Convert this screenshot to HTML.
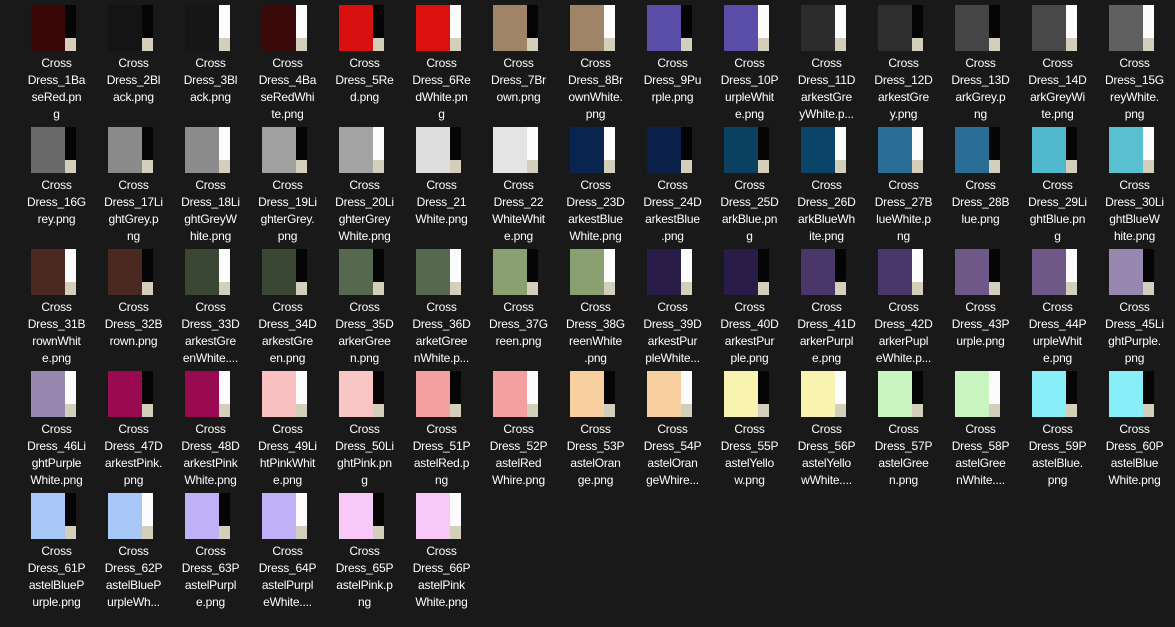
<!DOCTYPE html>
<html><head><meta charset="utf-8"><style>
html,body{margin:0;padding:0;background:#191919;width:1175px;height:627px;overflow:hidden}
.g{position:absolute;left:17px;top:5px;display:grid;grid-template-columns:repeat(15,77px);grid-auto-rows:122px}
.c{position:relative}
.c i{display:block;position:relative;margin-left:14px;width:45px;height:46px;background:var(--c)}
.c i::after{content:"";position:absolute;right:0;top:0;width:11px;height:46px;background:linear-gradient(var(--s) 0,var(--s) 33px,#d4cfbb 33px)}
.c i.b{--s:#050505}.c i.w{--s:#fcfcfc}
.c p{margin:4px 0 0 1px;width:77px;text-align:center;color:#fff;font:12px/17px "Liberation Sans",sans-serif;white-space:nowrap;letter-spacing:-0.2px}
</style></head><body><div class="g">
<div class="c"><i class="b" style="--c:#3a0808"></i><p>Cross<br>Dress_1Ba<br>seRed.pn<br>g</p></div>
<div class="c"><i class="b" style="--c:#141414"></i><p>Cross<br>Dress_2Bl<br>ack.png</p></div>
<div class="c"><i class="w" style="--c:#161616"></i><p>Cross<br>Dress_3Bl<br>ack.png</p></div>
<div class="c"><i class="w" style="--c:#3a0a0a"></i><p>Cross<br>Dress_4Ba<br>seRedWhi<br>te.png</p></div>
<div class="c"><i class="b" style="--c:#d81010"></i><p>Cross<br>Dress_5Re<br>d.png</p></div>
<div class="c"><i class="w" style="--c:#dd1010"></i><p>Cross<br>Dress_6Re<br>dWhite.pn<br>g</p></div>
<div class="c"><i class="b" style="--c:#a08468"></i><p>Cross<br>Dress_7Br<br>own.png</p></div>
<div class="c"><i class="w" style="--c:#a08468"></i><p>Cross<br>Dress_8Br<br>ownWhite.<br>png</p></div>
<div class="c"><i class="b" style="--c:#5a4ea8"></i><p>Cross<br>Dress_9Pu<br>rple.png</p></div>
<div class="c"><i class="w" style="--c:#5a4ea8"></i><p>Cross<br>Dress_10P<br>urpleWhit<br>e.png</p></div>
<div class="c"><i class="w" style="--c:#2c2c2c"></i><p>Cross<br>Dress_11D<br>arkestGre<br>yWhite.p...</p></div>
<div class="c"><i class="b" style="--c:#2e2e2e"></i><p>Cross<br>Dress_12D<br>arkestGre<br>y.png</p></div>
<div class="c"><i class="b" style="--c:#454545"></i><p>Cross<br>Dress_13D<br>arkGrey.p<br>ng</p></div>
<div class="c"><i class="w" style="--c:#484848"></i><p>Cross<br>Dress_14D<br>arkGreyWi<br>te.png</p></div>
<div class="c"><i class="w" style="--c:#606060"></i><p>Cross<br>Dress_15G<br>reyWhite.<br>png</p></div>
<div class="c"><i class="b" style="--c:#6a6a6a"></i><p>Cross<br>Dress_16G<br>rey.png</p></div>
<div class="c"><i class="b" style="--c:#8a8a8a"></i><p>Cross<br>Dress_17Li<br>ghtGrey.p<br>ng</p></div>
<div class="c"><i class="w" style="--c:#8c8c8c"></i><p>Cross<br>Dress_18Li<br>ghtGreyW<br>hite.png</p></div>
<div class="c"><i class="b" style="--c:#a0a0a0"></i><p>Cross<br>Dress_19Li<br>ghterGrey.<br>png</p></div>
<div class="c"><i class="w" style="--c:#a4a4a4"></i><p>Cross<br>Dress_20Li<br>ghterGrey<br>White.png</p></div>
<div class="c"><i class="b" style="--c:#dedede"></i><p>Cross<br>Dress_21<br>White.png</p></div>
<div class="c"><i class="w" style="--c:#e4e4e4"></i><p>Cross<br>Dress_22<br>WhiteWhit<br>e.png</p></div>
<div class="c"><i class="w" style="--c:#0a2450"></i><p>Cross<br>Dress_23D<br>arkestBlue<br>White.png</p></div>
<div class="c"><i class="b" style="--c:#0a2048"></i><p>Cross<br>Dress_24D<br>arkestBlue<br>.png</p></div>
<div class="c"><i class="b" style="--c:#0a4060"></i><p>Cross<br>Dress_25D<br>arkBlue.pn<br>g</p></div>
<div class="c"><i class="w" style="--c:#0a4468"></i><p>Cross<br>Dress_26D<br>arkBlueWh<br>ite.png</p></div>
<div class="c"><i class="w" style="--c:#2a6e98"></i><p>Cross<br>Dress_27B<br>lueWhite.p<br>ng</p></div>
<div class="c"><i class="b" style="--c:#2a6e98"></i><p>Cross<br>Dress_28B<br>lue.png</p></div>
<div class="c"><i class="b" style="--c:#50b8cc"></i><p>Cross<br>Dress_29Li<br>ghtBlue.pn<br>g</p></div>
<div class="c"><i class="w" style="--c:#58c0d0"></i><p>Cross<br>Dress_30Li<br>ghtBlueW<br>hite.png</p></div>
<div class="c"><i class="w" style="--c:#4a2a20"></i><p>Cross<br>Dress_31B<br>rownWhit<br>e.png</p></div>
<div class="c"><i class="b" style="--c:#4a2a20"></i><p>Cross<br>Dress_32B<br>rown.png</p></div>
<div class="c"><i class="w" style="--c:#3a4634"></i><p>Cross<br>Dress_33D<br>arkestGre<br>enWhite....</p></div>
<div class="c"><i class="b" style="--c:#3a4634"></i><p>Cross<br>Dress_34D<br>arkestGre<br>en.png</p></div>
<div class="c"><i class="b" style="--c:#56684e"></i><p>Cross<br>Dress_35D<br>arkerGree<br>n.png</p></div>
<div class="c"><i class="w" style="--c:#56684e"></i><p>Cross<br>Dress_36D<br>arketGree<br>nWhite.p...</p></div>
<div class="c"><i class="b" style="--c:#8aa070"></i><p>Cross<br>Dress_37G<br>reen.png</p></div>
<div class="c"><i class="w" style="--c:#8aa070"></i><p>Cross<br>Dress_38G<br>reenWhite<br>.png</p></div>
<div class="c"><i class="w" style="--c:#2a1c48"></i><p>Cross<br>Dress_39D<br>arkestPur<br>pleWhite...</p></div>
<div class="c"><i class="b" style="--c:#2a1c48"></i><p>Cross<br>Dress_40D<br>arkestPur<br>ple.png</p></div>
<div class="c"><i class="b" style="--c:#4a3668"></i><p>Cross<br>Dress_41D<br>arkerPurpl<br>e.png</p></div>
<div class="c"><i class="w" style="--c:#4a3668"></i><p>Cross<br>Dress_42D<br>arkerPupl<br>eWhite.p...</p></div>
<div class="c"><i class="b" style="--c:#6e5888"></i><p>Cross<br>Dress_43P<br>urple.png</p></div>
<div class="c"><i class="w" style="--c:#6e5888"></i><p>Cross<br>Dress_44P<br>urpleWhit<br>e.png</p></div>
<div class="c"><i class="b" style="--c:#9888b0"></i><p>Cross<br>Dress_45Li<br>ghtPurple.<br>png</p></div>
<div class="c"><i class="w" style="--c:#9888b0"></i><p>Cross<br>Dress_46Li<br>ghtPurple<br>White.png</p></div>
<div class="c"><i class="b" style="--c:#9a0a50"></i><p>Cross<br>Dress_47D<br>arkestPink.<br>png</p></div>
<div class="c"><i class="w" style="--c:#9a0a50"></i><p>Cross<br>Dress_48D<br>arkestPink<br>White.png</p></div>
<div class="c"><i class="w" style="--c:#f8c0c0"></i><p>Cross<br>Dress_49Li<br>htPinkWhit<br>e.png</p></div>
<div class="c"><i class="b" style="--c:#f8c4c4"></i><p>Cross<br>Dress_50Li<br>ghtPink.pn<br>g</p></div>
<div class="c"><i class="b" style="--c:#f4a0a0"></i><p>Cross<br>Dress_51P<br>astelRed.p<br>ng</p></div>
<div class="c"><i class="w" style="--c:#f4a0a0"></i><p>Cross<br>Dress_52P<br>astelRed<br>Whire.png</p></div>
<div class="c"><i class="b" style="--c:#f8d0a0"></i><p>Cross<br>Dress_53P<br>astelOran<br>ge.png</p></div>
<div class="c"><i class="w" style="--c:#f8d0a0"></i><p>Cross<br>Dress_54P<br>astelOran<br>geWhire...</p></div>
<div class="c"><i class="b" style="--c:#f8f4b0"></i><p>Cross<br>Dress_55P<br>astelYello<br>w.png</p></div>
<div class="c"><i class="w" style="--c:#f8f4b0"></i><p>Cross<br>Dress_56P<br>astelYello<br>wWhite....</p></div>
<div class="c"><i class="b" style="--c:#c8f4c0"></i><p>Cross<br>Dress_57P<br>astelGree<br>n.png</p></div>
<div class="c"><i class="w" style="--c:#c8f4c0"></i><p>Cross<br>Dress_58P<br>astelGree<br>nWhite....</p></div>
<div class="c"><i class="b" style="--c:#88eef8"></i><p>Cross<br>Dress_59P<br>astelBlue.<br>png</p></div>
<div class="c"><i class="b" style="--c:#88eef8"></i><p>Cross<br>Dress_60P<br>astelBlue<br>White.png</p></div>
<div class="c"><i class="b" style="--c:#a8c8f8"></i><p>Cross<br>Dress_61P<br>astelBlueP<br>urple.png</p></div>
<div class="c"><i class="w" style="--c:#a8c8f8"></i><p>Cross<br>Dress_62P<br>astelBlueP<br>urpleWh...</p></div>
<div class="c"><i class="b" style="--c:#c0b0f8"></i><p>Cross<br>Dress_63P<br>astelPurpl<br>e.png</p></div>
<div class="c"><i class="w" style="--c:#c0b0f8"></i><p>Cross<br>Dress_64P<br>astelPurpl<br>eWhite....</p></div>
<div class="c"><i class="b" style="--c:#f8c8f8"></i><p>Cross<br>Dress_65P<br>astelPink.p<br>ng</p></div>
<div class="c"><i class="w" style="--c:#f8c8f8"></i><p>Cross<br>Dress_66P<br>astelPink<br>White.png</p></div>
</div></body></html>
